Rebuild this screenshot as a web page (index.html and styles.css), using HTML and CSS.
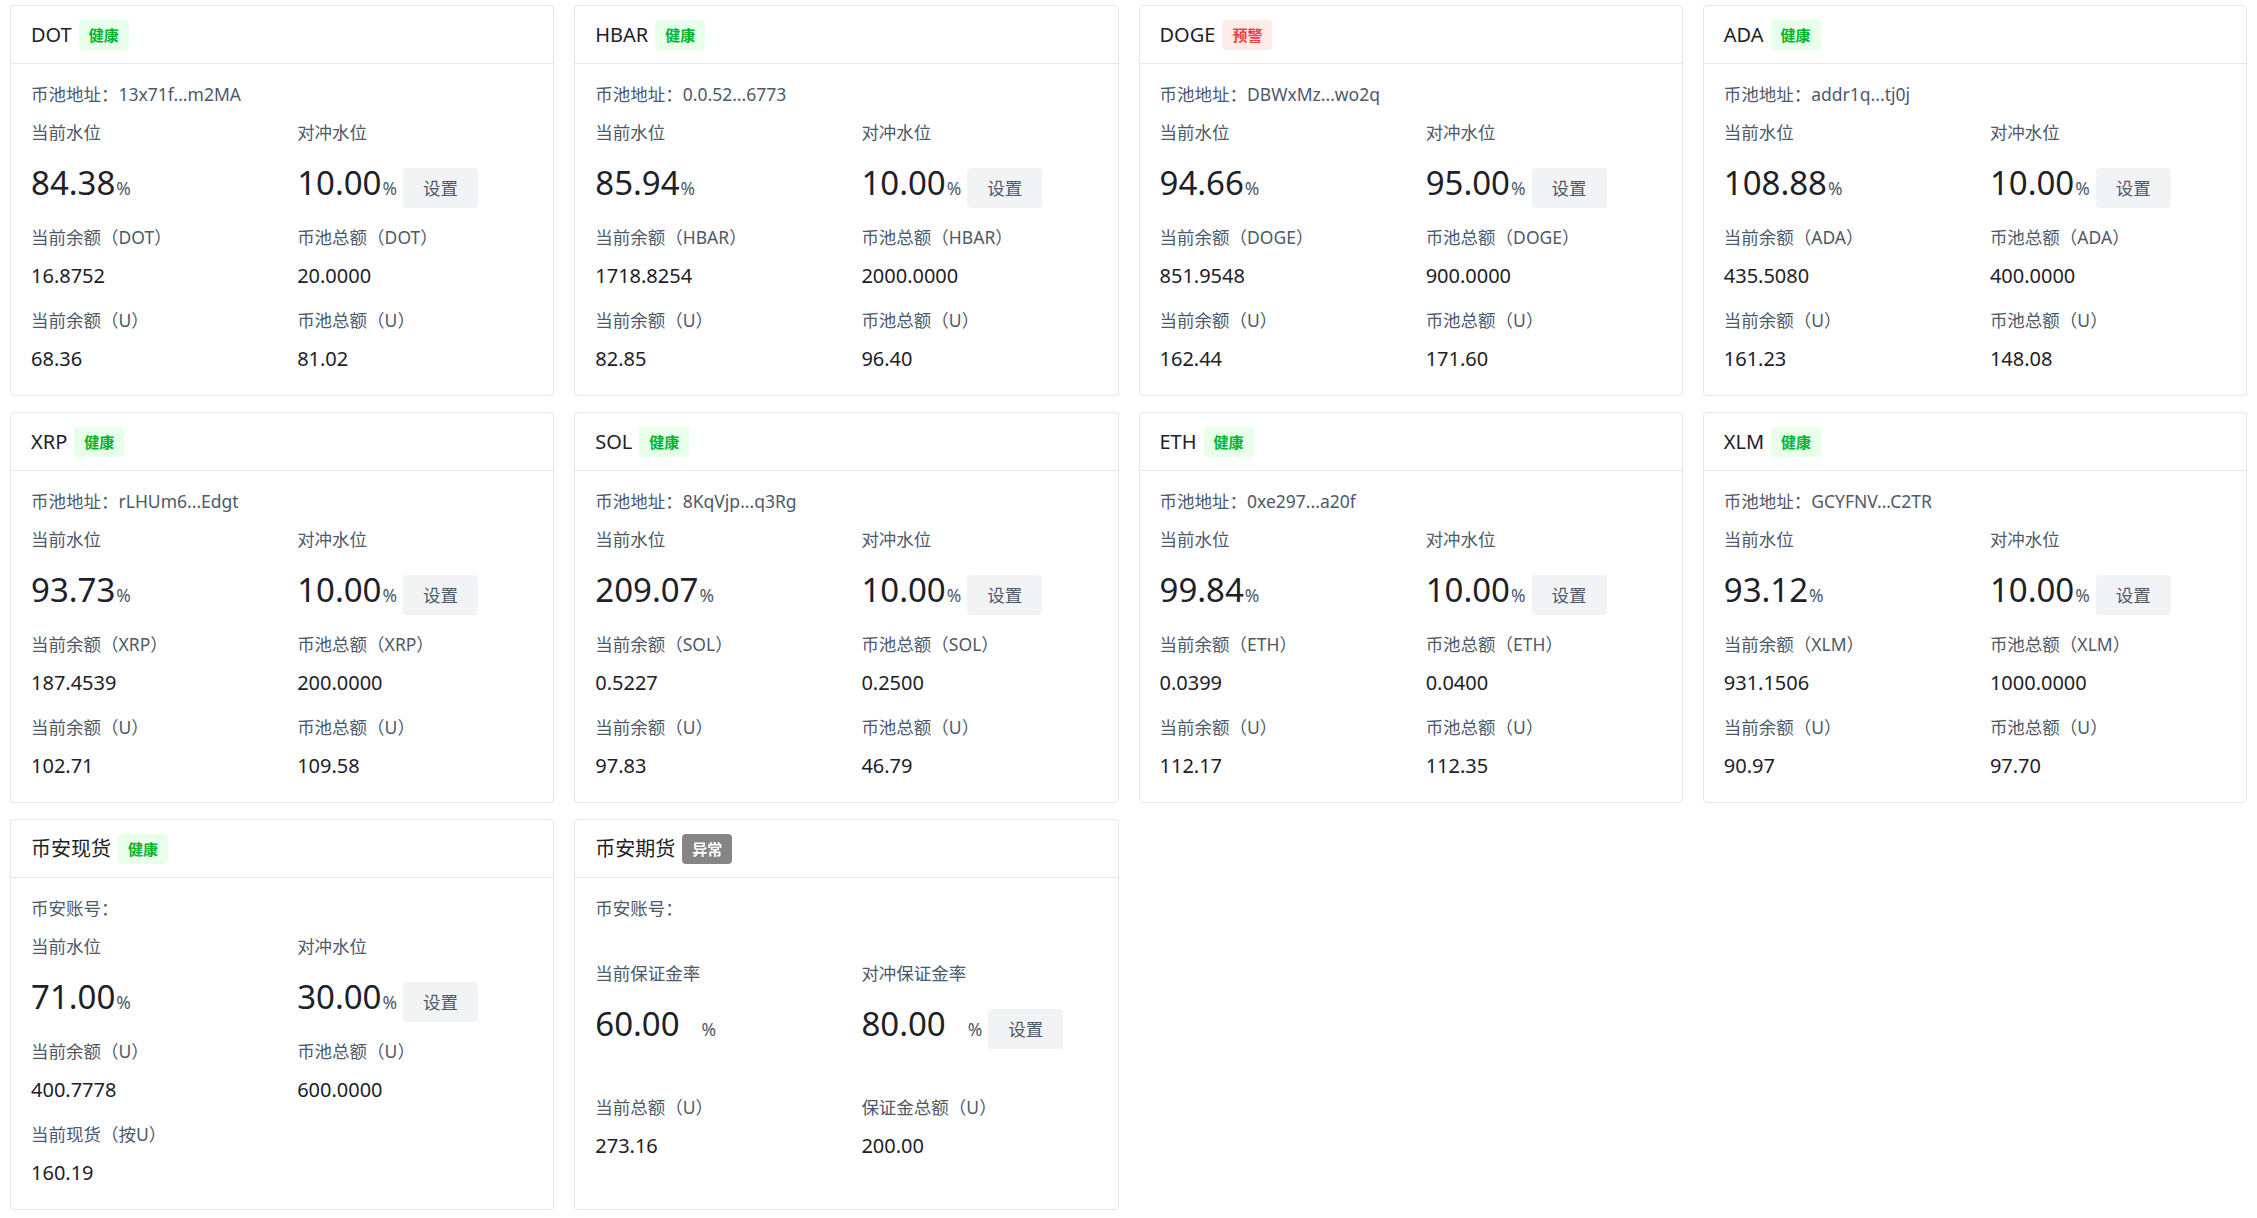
FILE: index.html
```html
<!DOCTYPE html>
<html lang="zh">
<head>
<meta charset="utf-8">
<title>资金池</title>
<link rel="stylesheet" href="styles.css">
</head>
<body>
<div class="page">

  <div class="card">
    <div class="card-header"><span class="title">DOT</span><span class="tag tag-green">健康</span></div>
    <div class="card-body">
      <div class="addr">币池地址：13x71f...m2MA</div>
      <div class="stats first">
        <div class="stat"><div class="label">当前水位</div><div class="big-row"><span class="big">84.38</span><span class="pct">%</span></div></div>
        <div class="stat"><div class="label">对冲水位</div><div class="big-row"><span class="big">10.00</span><span class="pct">%</span><button class="btn">设置</button></div></div>
      </div>
      <div class="stats mid">
        <div class="stat"><div class="label">当前余额（DOT）</div><div class="val">16.8752</div></div>
        <div class="stat"><div class="label">币池总额（DOT）</div><div class="val">20.0000</div></div>
      </div>
      <div class="stats last">
        <div class="stat"><div class="label">当前余额（U）</div><div class="val">68.36</div></div>
        <div class="stat"><div class="label">币池总额（U）</div><div class="val">81.02</div></div>
      </div>
    </div>
  </div>

  <div class="card">
    <div class="card-header"><span class="title">HBAR</span><span class="tag tag-green">健康</span></div>
    <div class="card-body">
      <div class="addr">币池地址：0.0.52...6773</div>
      <div class="stats first">
        <div class="stat"><div class="label">当前水位</div><div class="big-row"><span class="big">85.94</span><span class="pct">%</span></div></div>
        <div class="stat"><div class="label">对冲水位</div><div class="big-row"><span class="big">10.00</span><span class="pct">%</span><button class="btn">设置</button></div></div>
      </div>
      <div class="stats mid">
        <div class="stat"><div class="label">当前余额（HBAR）</div><div class="val">1718.8254</div></div>
        <div class="stat"><div class="label">币池总额（HBAR）</div><div class="val">2000.0000</div></div>
      </div>
      <div class="stats last">
        <div class="stat"><div class="label">当前余额（U）</div><div class="val">82.85</div></div>
        <div class="stat"><div class="label">币池总额（U）</div><div class="val">96.40</div></div>
      </div>
    </div>
  </div>

  <div class="card">
    <div class="card-header"><span class="title">DOGE</span><span class="tag tag-red">预警</span></div>
    <div class="card-body">
      <div class="addr">币池地址：DBWxMz...wo2q</div>
      <div class="stats first">
        <div class="stat"><div class="label">当前水位</div><div class="big-row"><span class="big">94.66</span><span class="pct">%</span></div></div>
        <div class="stat"><div class="label">对冲水位</div><div class="big-row"><span class="big">95.00</span><span class="pct">%</span><button class="btn">设置</button></div></div>
      </div>
      <div class="stats mid">
        <div class="stat"><div class="label">当前余额（DOGE）</div><div class="val">851.9548</div></div>
        <div class="stat"><div class="label">币池总额（DOGE）</div><div class="val">900.0000</div></div>
      </div>
      <div class="stats last">
        <div class="stat"><div class="label">当前余额（U）</div><div class="val">162.44</div></div>
        <div class="stat"><div class="label">币池总额（U）</div><div class="val">171.60</div></div>
      </div>
    </div>
  </div>

  <div class="card">
    <div class="card-header"><span class="title">ADA</span><span class="tag tag-green">健康</span></div>
    <div class="card-body">
      <div class="addr">币池地址：addr1q...tj0j</div>
      <div class="stats first">
        <div class="stat"><div class="label">当前水位</div><div class="big-row"><span class="big">108.88</span><span class="pct">%</span></div></div>
        <div class="stat"><div class="label">对冲水位</div><div class="big-row"><span class="big">10.00</span><span class="pct">%</span><button class="btn">设置</button></div></div>
      </div>
      <div class="stats mid">
        <div class="stat"><div class="label">当前余额（ADA）</div><div class="val">435.5080</div></div>
        <div class="stat"><div class="label">币池总额（ADA）</div><div class="val">400.0000</div></div>
      </div>
      <div class="stats last">
        <div class="stat"><div class="label">当前余额（U）</div><div class="val">161.23</div></div>
        <div class="stat"><div class="label">币池总额（U）</div><div class="val">148.08</div></div>
      </div>
    </div>
  </div>

  <div class="card">
    <div class="card-header"><span class="title">XRP</span><span class="tag tag-green">健康</span></div>
    <div class="card-body">
      <div class="addr">币池地址：rLHUm6...Edgt</div>
      <div class="stats first">
        <div class="stat"><div class="label">当前水位</div><div class="big-row"><span class="big">93.73</span><span class="pct">%</span></div></div>
        <div class="stat"><div class="label">对冲水位</div><div class="big-row"><span class="big">10.00</span><span class="pct">%</span><button class="btn">设置</button></div></div>
      </div>
      <div class="stats mid">
        <div class="stat"><div class="label">当前余额（XRP）</div><div class="val">187.4539</div></div>
        <div class="stat"><div class="label">币池总额（XRP）</div><div class="val">200.0000</div></div>
      </div>
      <div class="stats last">
        <div class="stat"><div class="label">当前余额（U）</div><div class="val">102.71</div></div>
        <div class="stat"><div class="label">币池总额（U）</div><div class="val">109.58</div></div>
      </div>
    </div>
  </div>

  <div class="card">
    <div class="card-header"><span class="title">SOL</span><span class="tag tag-green">健康</span></div>
    <div class="card-body">
      <div class="addr">币池地址：8KqVjp...q3Rg</div>
      <div class="stats first">
        <div class="stat"><div class="label">当前水位</div><div class="big-row"><span class="big">209.07</span><span class="pct">%</span></div></div>
        <div class="stat"><div class="label">对冲水位</div><div class="big-row"><span class="big">10.00</span><span class="pct">%</span><button class="btn">设置</button></div></div>
      </div>
      <div class="stats mid">
        <div class="stat"><div class="label">当前余额（SOL）</div><div class="val">0.5227</div></div>
        <div class="stat"><div class="label">币池总额（SOL）</div><div class="val">0.2500</div></div>
      </div>
      <div class="stats last">
        <div class="stat"><div class="label">当前余额（U）</div><div class="val">97.83</div></div>
        <div class="stat"><div class="label">币池总额（U）</div><div class="val">46.79</div></div>
      </div>
    </div>
  </div>

  <div class="card">
    <div class="card-header"><span class="title">ETH</span><span class="tag tag-green">健康</span></div>
    <div class="card-body">
      <div class="addr">币池地址：0xe297...a20f</div>
      <div class="stats first">
        <div class="stat"><div class="label">当前水位</div><div class="big-row"><span class="big">99.84</span><span class="pct">%</span></div></div>
        <div class="stat"><div class="label">对冲水位</div><div class="big-row"><span class="big">10.00</span><span class="pct">%</span><button class="btn">设置</button></div></div>
      </div>
      <div class="stats mid">
        <div class="stat"><div class="label">当前余额（ETH）</div><div class="val">0.0399</div></div>
        <div class="stat"><div class="label">币池总额（ETH）</div><div class="val">0.0400</div></div>
      </div>
      <div class="stats last">
        <div class="stat"><div class="label">当前余额（U）</div><div class="val">112.17</div></div>
        <div class="stat"><div class="label">币池总额（U）</div><div class="val">112.35</div></div>
      </div>
    </div>
  </div>

  <div class="card">
    <div class="card-header"><span class="title">XLM</span><span class="tag tag-green">健康</span></div>
    <div class="card-body">
      <div class="addr">币池地址：GCYFNV...C2TR</div>
      <div class="stats first">
        <div class="stat"><div class="label">当前水位</div><div class="big-row"><span class="big">93.12</span><span class="pct">%</span></div></div>
        <div class="stat"><div class="label">对冲水位</div><div class="big-row"><span class="big">10.00</span><span class="pct">%</span><button class="btn">设置</button></div></div>
      </div>
      <div class="stats mid">
        <div class="stat"><div class="label">当前余额（XLM）</div><div class="val">931.1506</div></div>
        <div class="stat"><div class="label">币池总额（XLM）</div><div class="val">1000.0000</div></div>
      </div>
      <div class="stats last">
        <div class="stat"><div class="label">当前余额（U）</div><div class="val">90.97</div></div>
        <div class="stat"><div class="label">币池总额（U）</div><div class="val">97.70</div></div>
      </div>
    </div>
  </div>

  <div class="card">
    <div class="card-header"><span class="title">币安现货</span><span class="tag tag-green">健康</span></div>
    <div class="card-body">
      <div class="addr">币安账号：</div>
      <div class="stats first">
        <div class="stat"><div class="label">当前水位</div><div class="big-row"><span class="big">71.00</span><span class="pct">%</span></div></div>
        <div class="stat"><div class="label">对冲水位</div><div class="big-row"><span class="big">30.00</span><span class="pct">%</span><button class="btn">设置</button></div></div>
      </div>
      <div class="stats mid">
        <div class="stat"><div class="label">当前余额（U）</div><div class="val">400.7778</div></div>
        <div class="stat"><div class="label">币池总额（U）</div><div class="val">600.0000</div></div>
      </div>
      <div class="stats last">
        <div class="stat"><div class="label">当前现货（按U）</div><div class="val">160.19</div></div>
      </div>
    </div>
  </div>

  <div class="card">
    <div class="card-header"><span class="title">币安期货</span><span class="tag tag-gray">异常</span></div>
    <div class="card-body">
      <div class="addr">币安账号：</div>
      <div class="stats first futures">
        <div class="stat"><div class="label">当前保证金率</div><div class="big-row"><span class="big">60.00</span><span class="pct spaced">%</span></div></div>
        <div class="stat"><div class="label">对冲保证金率</div><div class="big-row"><span class="big">80.00</span><span class="pct spaced">%</span><button class="btn">设置</button></div></div>
      </div>
      <div class="stats mid futures-next">
        <div class="stat"><div class="label">当前总额（U）</div><div class="val">273.16</div></div>
        <div class="stat"><div class="label">保证金总额（U）</div><div class="val">200.00</div></div>
      </div>
    </div>
  </div>

</div>
</body>
</html>
```
FILE: styles.css
```css
html, body {
  margin: 0;
  padding: 0;
  background: #ffffff;
}

body {
  font-family: "Noto Sans", "Noto Sans CJK SC", sans-serif;
  color: #1d2129;
}

.page {
  padding: 5px 10px;
  display: grid;
  grid-template-columns: repeat(4, 1fr);
  column-gap: 20px;
  row-gap: 16px;
}

.card {
  box-sizing: border-box;
  height: 391px;
  border: 1px solid #e5e6eb;
  border-radius: 4px;
  background: #fff;
}

.card-header {
  box-sizing: border-box;
  height: 58px;
  padding: 0 20px;
  border-bottom: 1px solid #e5e6eb;
  display: flex;
  align-items: center;
}

.title {
  font-size: 20px;
  line-height: 28px;
  color: #1d2129;
}

.tag {
  margin-left: 7px;
  height: 30px;
  line-height: 30px;
  padding: 0 10px;
  border-radius: 4px;
  font-size: 15px;
  font-weight: 600;
}

.tag-green {
  background: #e8ffea;
  color: #00b42a;
}

.tag-red {
  background: #ffece8;
  color: #f53f3f;
}

.tag-gray {
  background: #858585;
  color: #ffffff;
}

.card-body {
  padding: 20px;
}

.addr {
  font-size: 17.5px;
  line-height: 20px;
  color: #4e5969;
}

.stats {
  display: grid;
  grid-template-columns: 1fr 1fr;
  column-gap: 30px;
}

.stats.first {
  margin-top: 17px;
}

.stats.mid {
  margin-top: 18px;
}

.stats.last {
  margin-top: 19px;
}

.stats.futures {
  margin-top: 44px;
}

.stats.futures-next {
  margin-top: 47px;
}

.label {
  font-size: 17.5px;
  line-height: 22px;
  color: #4e5969;
  white-space: nowrap;
}

.big-row {
  margin-top: 25px;
  height: 40px;
  display: flex;
  align-items: baseline;
}

.big {
  font-size: 33px;
  line-height: 30px;
  color: #1d2129;
}

.pct {
  margin-left: 1px;
  font-size: 17.5px;
  line-height: 20px;
  color: #4e5969;
}

.pct.spaced {
  margin-left: 22px;
}

.btn {
  margin-left: 6px;
  height: 40px;
  padding: 0 20px;
  border: 0;
  border-radius: 4px;
  background: #f2f3f5;
  color: #4e5969;
  font-family: "Noto Sans", "Noto Sans CJK SC", sans-serif;
  font-size: 17.5px;
  line-height: 40px;
}

.val {
  margin-top: 14px;
  font-size: 20px;
  line-height: 28px;
  color: #1d2129;
}
```
